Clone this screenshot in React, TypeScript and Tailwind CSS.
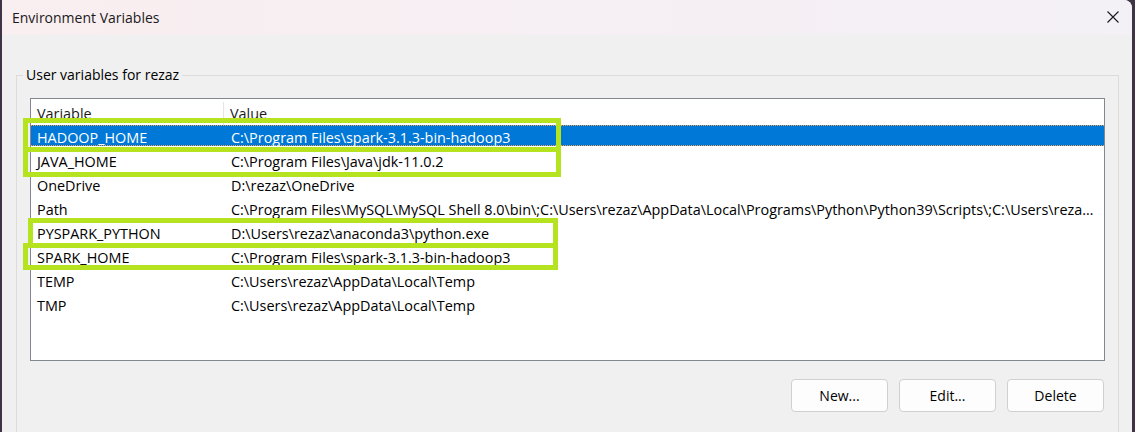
import React from 'react';

type Row = { name: string; value: string };

const rows: Row[] = [
  { name: 'HADOOP_HOME', value: 'C:\\Program Files\\spark-3.1.3-bin-hadoop3' },
  { name: 'JAVA_HOME', value: 'C:\\Program Files\\Java\\jdk-11.0.2' },
  { name: 'OneDrive', value: 'D:\\rezaz\\OneDrive' },
  {
    name: 'Path',
    value:
      'C:\\Program Files\\MySQL\\MySQL Shell 8.0\\bin\\;C:\\Users\\rezaz\\AppData\\Local\\Programs\\Python\\Python39\\Scripts\\;C:\\Users\\rezaz\\AppData\\Local\\Programs\\Python\\Python39\\',
  },
  { name: 'PYSPARK_PYTHON', value: 'D:\\Users\\rezaz\\anaconda3\\python.exe' },
  { name: 'SPARK_HOME', value: 'C:\\Program Files\\spark-3.1.3-bin-hadoop3' },
  { name: 'TEMP', value: 'C:\\Users\\rezaz\\AppData\\Local\\Temp' },
  { name: 'TMP', value: 'C:\\Users\\rezaz\\AppData\\Local\\Temp' },
];

function DialogButton({ label }: { label: string }) {
  return (
    <button className="h-[33px] w-[97px] rounded-[4px] border border-[#d0d0d0] bg-[#fdfdfd] text-[14px] text-black">
      {label}
    </button>
  );
}

export default function App() {
  return (
    <div
      className="relative flex h-[432px] w-[1135px] overflow-hidden bg-[#3f3346] pl-[2px] pr-[3px]"
      style={{ fontFamily: '"Open Sans", "Liberation Sans", sans-serif' }}
    >
      <div className="flex min-w-0 flex-1 flex-col overflow-hidden rounded-tr-[8px] bg-[#f0f0f0]">
        {/* title bar */}
        <div className="flex h-[35px] shrink-0 items-center justify-between bg-gradient-to-r from-[#f9eef0] to-[#f3f0f6] pl-[10px] pr-[13px]">
          <span className="text-[14px] text-[#1a1a1a]">Environment Variables</span>
          <svg width="12" height="12" viewBox="0 0 12 12" className="-mt-[2px]">
            <path d="M0.5 0.5 L11.5 11.5 M11.5 0.5 L0.5 11.5" stroke="#1a1a1a" strokeWidth="1.1" />
          </svg>
        </div>

        {/* group box */}
        <div className="relative ml-[14px] mr-[13px] mt-[40px] flex-1 border border-b-0 border-[#dcdcdc] pl-[13px] pr-[13px] pt-[22px]">
          <span className="absolute -top-[11px] left-[6px] bg-[#f0f0f0] px-[3px] text-[14px] leading-[20px] text-black">
            User variables for rezaz
          </span>

          {/* list view */}
          <div className="h-[263px] overflow-hidden border border-[#828790] bg-white text-[14.4px] text-black">
            <div className="flex h-[26px] items-center pt-[3px]">
              <div className="flex h-full w-[193px] items-center border-r border-[#e5e5e5] pl-[6px] text-[#1a1a1a]">
                Variable
              </div>
              <div className="pl-[6px] text-[#1a1a1a]">Value</div>
            </div>
            {rows.map((r, i) => (
              <div key={r.name} className="flex h-[24px] items-start">
                <div
                  className={
                    i === 0
                      ? 'flex h-[21px] min-w-0 flex-1 items-center border-y border-dotted border-[#f0a050] bg-[#0078d7] pt-[4px] text-white'
                      : 'flex h-[21px] min-w-0 flex-1 items-center pt-[5px]'
                  }
                >
                  <div className="w-[194px] shrink-0 pl-[6px] leading-[20px]">{r.name}</div>
                  <div className="min-w-0 flex-1 truncate pl-[6px] pr-[8px] leading-[20px]">{r.value}</div>
                </div>
              </div>
            ))}
          </div>

          <div className="mt-[18px] flex justify-end gap-[11px] pr-[1px]">
            <DialogButton label="New..." />
            <DialogButton label="Edit..." />
            <DialogButton label="Delete" />
          </div>
        </div>
      </div>

      {/* hand-drawn highlight annotations */}
      <div className="pointer-events-none absolute left-[23px] top-[118px] h-[59px] w-[538px] border-[5px] border-[#b6e31f]" />
      <div className="pointer-events-none absolute left-[23px] top-[147px] h-[5px] w-[538px] bg-[#b6e31f]" />
      <div className="pointer-events-none absolute left-[28px] top-[218px] h-[30px] w-[530px] border-[5px] border-[#b6e31f]" />
      <div className="pointer-events-none absolute left-[23px] top-[243px] h-[27px] w-[535px] border-[5px] border-[#b6e31f]" />
    </div>
  );
}
